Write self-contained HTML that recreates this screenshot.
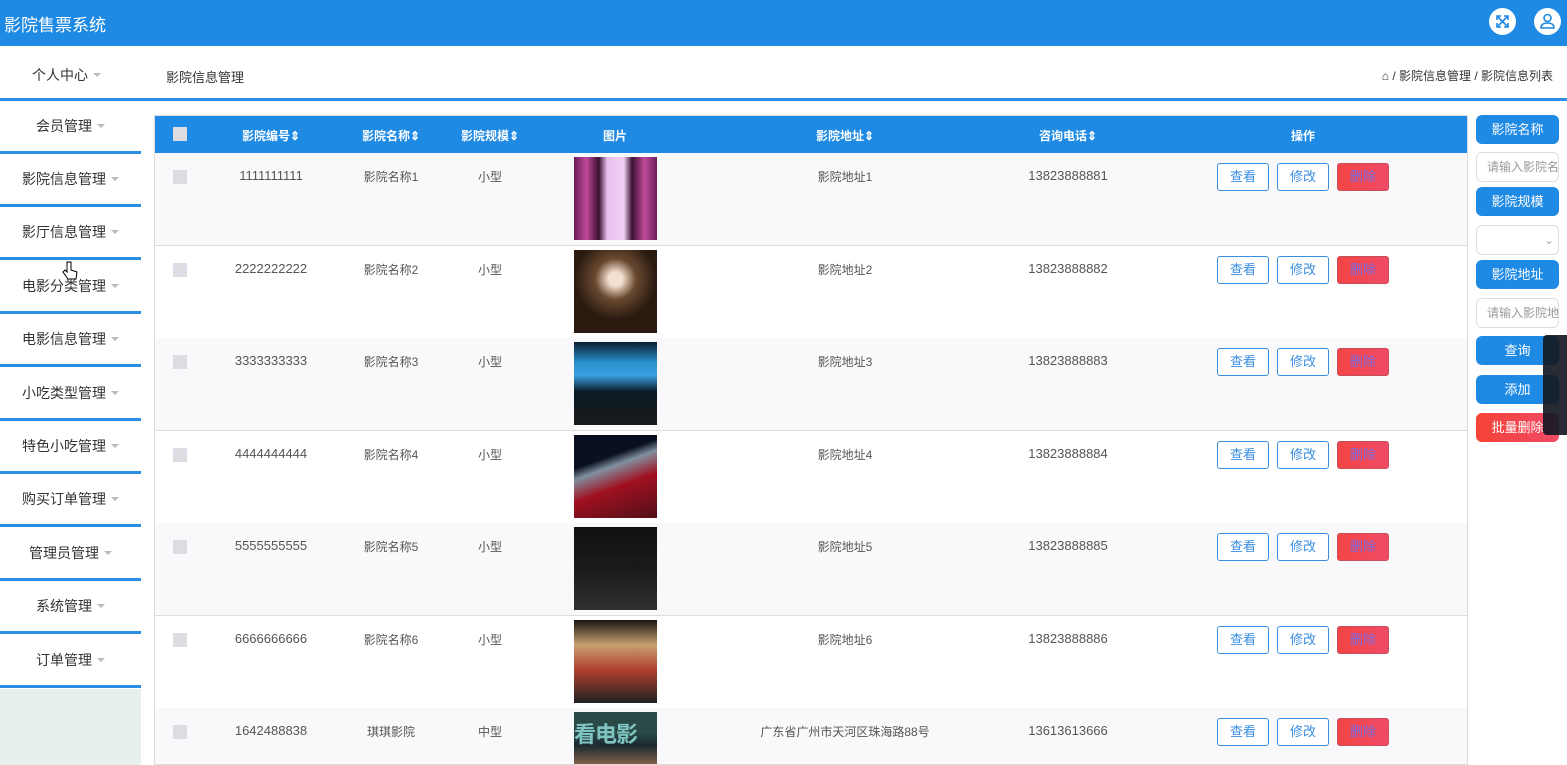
<!DOCTYPE html>
<html style="overflow:hidden;height:765px"><head><meta charset="utf-8"><style>
*{margin:0;padding:0;box-sizing:border-box}
body{width:1567px;height:765px;overflow:hidden;background:#fff;font-family:"Liberation Sans","Noto Sans CJK SC",sans-serif;font-size:13px;color:#444;position:relative}
.abs{position:absolute}
.top{left:0;top:0;width:1567px;height:46px;background:#1f8ae3}
.side{left:0;width:141px;height:53px;border-bottom:3px solid #2b8de4;text-align:center;line-height:50px;font-size:14px;color:#333}
.caret{display:inline-block;width:0;height:0;border-left:4px solid transparent;border-right:4px solid transparent;border-top:4px solid #bbb;vertical-align:middle;margin-left:5px;margin-top:-3px}
.row{left:155px;width:1312px;border-bottom:1px solid #ddd}
.c{position:absolute;transform:translateX(-50%);white-space:nowrap;font-size:13px;color:#555}
.th{position:absolute;transform:translateX(-50%);white-space:nowrap;font-size:12px;color:#fff;font-weight:bold;top:11px}
.cb{position:absolute;left:18px;width:14px;height:14px;background:#dcdde3}
.btn{position:absolute;width:52px;height:28px;border:1px solid #3a8ee0;border-radius:3px;text-align:center;line-height:26px;font-size:13px;background:#fff;color:#3a8ee0}
.del{background:linear-gradient(90deg,#f34545,#f04a66);color:#7a6be0;border-color:#c5505a}
.rb{left:1476px;width:83px;height:29px;border-radius:6px;background:#1f8ae3;color:#fff;text-align:center;line-height:29px;font-size:13px}
.ri{left:1476px;width:83px;height:30px;border-radius:6px;border:1px solid #ddd;background:#fff;color:#999;font-size:12px;line-height:28px;padding-left:10px;overflow:hidden;white-space:nowrap}
.img{position:absolute;left:419px;top:4px;width:83px;height:83px}
</style></head><body>
<div class="abs top"></div>
<div class="abs" style="left:4px;top:11px;color:#fff;font-size:17px">影院售票系统</div>
<div class="abs" style="left:1489px;top:8px;width:27px;height:27px;border-radius:50%;background:#fff">
<svg width="27" height="27" viewBox="0 0 27 27"><g stroke="#1f8ae3" stroke-width="1.6" fill="none"><path d="M8 8l11 11M19 8L8 19M8 12V8h4M19 12V8h-4M8 15v4h4M19 15v4h-4"/></g></svg></div>
<div class="abs" style="left:1534px;top:8px;width:27px;height:27px;border-radius:50%;background:#fff">
<svg width="27" height="27" viewBox="0 0 27 27"><g stroke="#1f8ae3" stroke-width="1.6" fill="none"><circle cx="13.5" cy="10" r="3.5"/><path d="M7 20c0-4 3-5 6.5-5s6.5 1 6.5 5z"/></g></svg></div>
<div class="abs" style="left:0;top:98px;width:1567px;height:3px;background:#2b8de4"></div>
<div class="abs" style="left:32px;top:65px;font-size:14px;color:#333">个人中心<span class="caret"></span></div>
<div class="abs" style="left:166px;top:67px;font-size:13px;color:#333">影院信息管理</div>
<div class="abs" style="right:14px;top:67px;font-size:12px;color:#333">⌂ / 影院信息管理 / 影院信息列表</div>

<div class="abs" style="left:0;top:689px;width:141px;height:76px;background:#e6f1ec"></div>
<div class="abs side" style="top:101px">会员管理<span class="caret"></span></div>
<div class="abs side" style="top:154px">影院信息管理<span class="caret"></span></div>
<div class="abs side" style="top:207px">影厅信息管理<span class="caret"></span></div>
<div class="abs side" style="top:261px">电影分类管理<span class="caret"></span></div>
<div class="abs side" style="top:314px">电影信息管理<span class="caret"></span></div>
<div class="abs side" style="top:368px">小吃类型管理<span class="caret"></span></div>
<div class="abs side" style="top:421px">特色小吃管理<span class="caret"></span></div>
<div class="abs side" style="top:474px">购买订单管理<span class="caret"></span></div>
<div class="abs side" style="top:528px">管理员管理<span class="caret"></span></div>
<div class="abs side" style="top:581px">系统管理<span class="caret"></span></div>
<div class="abs side" style="top:635px">订单管理<span class="caret"></span></div>

<div class="abs" style="left:154px;top:115px;width:1314px;height:650px;border:1px solid #ddd;border-bottom:none"></div>
<div class="abs" style="left:155px;top:116px;width:1312px;height:37px;background:#1f8ae3">
<div class="cb" style="top:11px;left:18px"></div>
<div class="th" style="left:116px">影院编号⇕</div>
<div class="th" style="left:236px">影院名称⇕</div>
<div class="th" style="left:335px">影院规模⇕</div>
<div class="th" style="left:460px">图片</div>
<div class="th" style="left:690px">影院地址⇕</div>
<div class="th" style="left:913px">咨询电话⇕</div>
<div class="th" style="left:1148px">操作</div>
</div>

<div id="rows"></div>
<script>
var d=[["1111111111","影院名称1","小型","影院地址1","13823888881","linear-gradient(90deg,#6a1d5a,#c04a9a 15%,#3a1030 30%,#e8c0f0 40%,#f0d0f5 60%,#3a1030 70%,#c04a9a 85%,#6a1d5a)"],
["2222222222","影院名称2","小型","影院地址2","13823888882","radial-gradient(circle at 50% 35%,#f4e0d0 10%,#6a4a30 30%,#2a1a10 60%)"],
["3333333333","影院名称3","小型","影院地址3","13823888883","linear-gradient(180deg,#0a2030,#2a90d0 25%,#3aa0e0 40%,#0a1a25 60%,#1a1a1a)"],
["4444444444","影院名称4","小型","影院地址4","13823888884","linear-gradient(160deg,#0a1020 30%,#8090a0 40%,#a01020 60%,#501018)"],
["5555555555","影院名称5","小型","影院地址5","13823888885","linear-gradient(180deg,#101010,#1a1a1a 50%,#303030)"],
["6666666666","影院名称6","小型","影院地址6","13823888886","linear-gradient(180deg,#1a1410,#c8a070 30%,#b04030 60%,#202020)"],
["1642488838","琪琪影院","中型","广东省广州市天河区珠海路88号","13613613666","linear-gradient(180deg,#2a4a48 25%,#1a2a30 40%,#a07050 70%,#302020)"]];
var h="";
for(var i=0;i<7;i++){var t=153+i*92.5,r=d[i];var hh=Math.min(93,765-t);
h+='<div class="abs row" style="top:'+t+'px;height:'+hh+'px;overflow:hidden;background:'+(i%2?'#fff':'#f9f9fb')+'">'+
'<div class="cb" style="top:17px"></div>'+
'<div class="c" style="left:116px;top:15px">'+r[0]+'</div>'+
'<div class="c" style="left:236px;top:15px;font-size:12px">'+r[1]+'</div>'+
'<div class="c" style="left:335px;top:15px;font-size:12px">'+r[2]+'</div>'+
'<div class="img" style="background:'+r[5]+'"></div>'+
'<div class="c" style="left:690px;top:15px;font-size:12px">'+r[3]+'</div>'+
'<div class="c" style="left:913px;top:15px">'+r[4]+'</div>'+
'<div class="btn" style="left:1062px;top:10px">查看</div>'+
'<div class="btn" style="left:1122px;top:10px">修改</div>'+
'<div class="btn del" style="left:1182px;top:10px">删除</div></div>';}
document.getElementById("rows").innerHTML=h;
</script>
<div class="abs" style="left:574px;top:717px;color:#7fc4c0;font-size:22px;font-weight:bold;letter-spacing:-1px">看电影</div>

<div class="abs rb" style="top:115px">影院名称</div>
<div class="abs ri" style="top:152px">请输入影院名称</div>
<div class="abs rb" style="top:187px">影院规模</div>
<div class="abs ri" style="top:225px"><span style="position:absolute;right:4px;top:0;color:#aaa">⌄</span></div>
<div class="abs rb" style="top:260px">影院地址</div>
<div class="abs ri" style="top:298px">请输入影院地址</div>
<div class="abs rb" style="top:336px">查询</div>
<div class="abs rb" style="top:375px">添加</div>
<div class="abs rb" style="top:413px;background:linear-gradient(90deg,#f44336,#f04a66)">批量删除</div>
<div class="abs" style="left:1543px;top:335px;width:24px;height:100px;background:rgba(20,25,35,.92);border-radius:4px 0 0 4px"></div>
<svg class="abs" style="left:62px;top:260px" width="16" height="22" viewBox="0 0 16 22"><path d="M5 2v10l-2-2-2 2 5 7h8l1-7-6-2V2z" fill="#fff" stroke="#000" stroke-width="1"/></svg>
</body></html>
